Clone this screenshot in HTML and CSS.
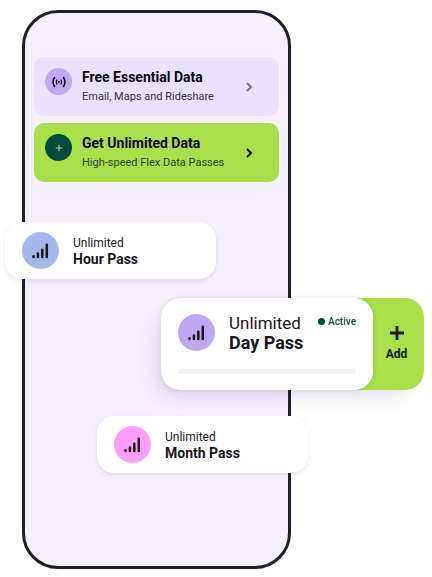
FILE: index.html
```html
<!DOCTYPE html>
<html lang="en">
<head>
<meta charset="utf-8">
<meta name="viewport" content="width=device-width, initial-scale=1">
<title>Data passes</title>
<link rel="stylesheet" href="styles.css">
</head>
<body>
<svg class="sprite" aria-hidden="true">
  <symbol id="bars" viewBox="0 0 18 18">
    <path d="M1.500 14.200v.9M5.900 11.500v3.600M10.300 7.700v7.400M14.800 2.700v12.400" fill="none" stroke="currentColor" stroke-width="2.500" stroke-linecap="round"/>
  </symbol>
</svg>
<main class="phone">
  <nav class="offers">
    <a class="offer" href="#free">
      <span class="offer-icon">
        <svg width="14" height="12" viewBox="0 0 14 12" fill="none" stroke="currentColor" stroke-width="1.500" stroke-linecap="round"><path d="M2.500 1.500Q-.500 6 2.500 10.500M11.500 1.500Q14.500 6 11.500 10.500"/><path stroke-width="1.200" d="M4.900 4Q3.900 6 4.900 8M9.100 4Q10.100 6 9.100 8"/><circle cx="7" cy="6" r=".9" fill="currentColor" stroke="none"/></svg>
      </span>
      <span class="offer-text"><strong>Free Essential Data</strong><span>Email, Maps and Rideshare</span></span>
      <svg class="chevron" width="8" height="12" viewBox="0 0 8 12"><path d="M2 2l4 4-4 4"/></svg>
    </a>
    <a class="offer offer-green" href="#unlimited">
      <span class="offer-icon">
        <svg width="8" height="8" viewBox="0 0 8 8" fill="none" stroke="currentColor" stroke-width="1.100"><path d="M4 .7v6.600M.7 4h6.600"/></svg>
      </span>
      <span class="offer-text"><strong>Get Unlimited Data</strong><span>High-speed Flex Data Passes</span></span>
      <svg class="chevron" width="8" height="12" viewBox="0 0 8 12"><path d="M2 2l4 4-4 4"/></svg>
    </a>
  </nav>
  <section class="pass pass-hour">
    <span class="pass-icon"><svg width="18" height="18"><use href="#bars"/></svg></span>
    <h2><span>Unlimited</span> Hour Pass</h2>
  </section>
  <div class="day">
    <section class="day-card">
      <div class="day-head">
        <span class="pass-icon"><svg width="18" height="18"><use href="#bars"/></svg></span>
        <h2><span>Unlimited</span> Day Pass</h2>
        <span class="status">Active</span>
      </div>
      <div class="track"></div>
    </section>
    <button class="add" type="button">
      <svg width="14" height="14" viewBox="0 0 14 14" fill="none" stroke="currentColor" stroke-width="2.800"><path d="M7 0v14M0 7h14"/></svg>
      Add
    </button>
  </div>
  <section class="pass pass-month">
    <span class="pass-icon"><svg width="18" height="18"><use href="#bars"/></svg></span>
    <h2><span>Unlimited</span> Month Pass</h2>
  </section>
</main>
</body>
</html>
```
FILE: styles.css
```css
* {
  box-sizing: border-box;
}

body {
  margin: 0;
  background: #fff;
  color: #18171c;
  font-family: Roboto, "Liberation Sans", sans-serif;
}

.sprite {
  position: absolute;
  width: 0;
  height: 0;
}

.phone {
  display: flow-root;
  margin: 10px 141px 9px 22px;
  padding: 44px 9px 93px;
  border: 3px solid #211f27;
  border-radius: 36px;
  background: #f4f0ff;
}

.offers {
  display: grid;
  gap: 7px;
}

.offer {
  display: flex;
  align-items: center;
  gap: 10px;
  padding: 11px 26px 11px 11px;
  border-radius: 10px;
  background: #e9e2fe;
  color: #08070c;
  text-decoration: none;
}

.offer-icon {
  display: grid;
  place-items: center;
  align-self: flex-start;
  flex: none;
  width: 27px;
  height: 27px;
  border-radius: 50%;
  background: #bea8f4;
}

.offer-text {
  display: grid;
  flex: 1;
  gap: 3px;
  font-size: 11px;
  line-height: 16px;
  white-space: nowrap;
}

.offer-text strong {
  font-size: 14px;
  line-height: 18px;
}

.offer-text span {
  color: #36323f;
}

.chevron {
  flex: none;
  fill: none;
  stroke: #77727f;
  stroke-width: 2;
}

.offer-green {
  background: #aadf4b;
}

.offer-green .offer-icon {
  background: #044a38;
  color: #a9d9b5;
}

.offer-green .offer-text span {
  color: #2b4220;
}

.offer-green .chevron {
  stroke: #08070c;
}

h2 {
  margin: 0;
  font-size: 14px;
  line-height: 16px;
  white-space: nowrap;
}

h2 span {
  display: block;
  font-size: 12px;
  font-weight: 400;
}

.pass {
  display: flex;
  align-items: center;
  gap: 14px;
  width: 211px;
  padding: 10px 17px;
  border-radius: 17px;
  background: #fff;
  box-shadow: 0 2px 4px rgb(60 40 100 / 12%);
}

.pass-icon {
  display: grid;
  place-items: center;
  flex: none;
  width: 37px;
  height: 37px;
  border-radius: 50%;
  background: #bea8f4;
}

.pass-hour {
  margin: 40px 0 0 -29px;
}

.pass-hour .pass-icon {
  background: #a5b8ed;
}

.pass-month {
  margin: 26px 0 0 63px;
}

.pass-month .pass-icon {
  background: #ff9dfa;
}

.day {
  display: flex;
  width: 263px;
  margin: 19px 0 0 127px;
  border-radius: 19px;
  background: #aadf4b;
  box-shadow: -10px 12px 20px -8px rgb(60 40 100 / 18%);
}

.day-card {
  flex: 1;
  padding: 16px 17px;
  border-radius: 19px;
  background: #fff;
  box-shadow: 1px 0 4px rgb(40 60 20 / 14%);
}

.day-head {
  display: flex;
  gap: 14px;
}

.day-head h2 {
  flex: 1;
  font-size: 18px;
  line-height: 19px;
}

.day-head h2 span {
  font-size: 17px;
}

.status {
  display: flex;
  align-items: center;
  gap: 3px;
  height: 14px;
  color: #164b43;
  font-size: 10px;
  font-weight: 500;
}

.status::before {
  content: "";
  width: 7px;
  height: 7px;
  border-radius: 50%;
  background: #044a38;
}

.track {
  height: 5px;
  margin-top: 17px;
  border-radius: 3px;
  background: #f2f2f2;
}

.add {
  display: flex;
  flex: none;
  flex-direction: column;
  align-items: center;
  justify-content: center;
  gap: 6px;
  width: 51px;
  padding: 0 4px 0 0;
  border: 0;
  background: none;
  color: #14200a;
  font: 700 12px/16px Roboto, "Liberation Sans", sans-serif;
}
```
